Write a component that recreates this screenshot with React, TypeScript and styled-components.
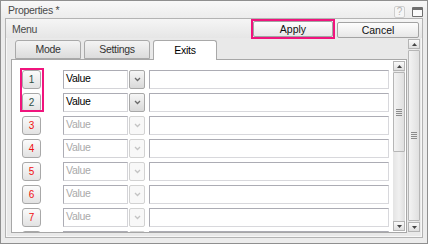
import React from "react";
import styled, { createGlobalStyle } from "styled-components";

const GlobalStyle = createGlobalStyle`
  * { box-sizing: border-box; }
  body {
    margin: 0;
    font-family: "Liberation Sans", Arial, sans-serif;
    font-size: 10.5px;
    letter-spacing: -0.3px;
  }
`;

const PINK = "#f0147d";

const Window = styled.div`
  width: 428px;
  height: 244px;
  border: 1px solid #8f8f8f;
  background: #ececec;
  display: flex;
  flex-direction: column;
  overflow: hidden;
`;

const TitleBar = styled.div`
  height: 17px;
  flex: none;
  display: flex;
  align-items: center;
  padding: 0 4px 0 7px;
  background: linear-gradient(#f8f8f8, #ececec);
`;

const TitleText = styled.span`
  color: #4a4a4a;
`;

const TitleIcons = styled.div`
  margin-left: auto;
  display: flex;
  align-items: center;
  gap: 7px;
  padding-top: 4px;
`;

const HelpIcon = styled.div`
  width: 11px;
  height: 12px;
  border: 1px solid #cfcfcf;
  border-radius: 2px;
  color: #b5b5b5;
  font-size: 10px;
  line-height: 10px;
  text-align: center;
  background: #f6f6f6;
`;

const MaxIcon = styled.div`
  width: 11px;
  height: 10px;
  border: 1px solid #6f6f6f;
  border-top-width: 3px;
  border-radius: 1px;
  background: #fafafa;
`;

const Frame = styled.div`
  flex: 1;
  min-height: 0;
  margin: 0 4px 5px 4px;
  border: 1px solid #b3b3b3;
  box-shadow: inset 0 0 0 1px #f7f7f7;
  background: #e9e9e9;
  display: flex;
  flex-direction: column;
`;

const MenuBar = styled.div`
  height: 19px;
  flex: none;
  display: flex;
  align-items: center;
  padding: 0 3px 0 6px;
  background: linear-gradient(#f5f5f5, #e6e6e6);
`;

const MenuTitle = styled.span`
  color: #4a4a4a;
`;

const Actions = styled.div`
  margin-left: auto;
  display: flex;
  align-items: center;
  gap: 2px;
  padding-top: 2px;
`;

const Marked = styled.div`
  border: 2px solid ${PINK};
  margin-top: -1px;
`;

const ActionButton = styled.button<{ $width: number }>`
  width: ${(p) => p.$width}px;
  height: 16px;
  padding: 0;
  font: inherit;
  color: #111;
  border: 1px solid #a3a3a3;
  border-radius: 2px;
  background: linear-gradient(#fdfdfd, #e7e7e7);
  display: block;
`;

const Main = styled.div`
  flex: 1;
  min-height: 0;
  display: flex;
  padding: 1px 3px 4px 5px;
  gap: 1px;
`;

const Column = styled.div`
  flex: 1;
  min-height: 0;
  display: flex;
  flex-direction: column;
`;

const TabRow = styled.div`
  height: 20px;
  flex: none;
  display: flex;
  align-items: flex-end;
  gap: 3px;
  padding-left: 4px;
  position: relative;
  z-index: 1;
`;

const Tab = styled.div<{ $active?: boolean }>`
  width: ${(p) => (p.$active ? 64 : 66)}px;
  height: ${(p) => (p.$active ? 20 : 19)}px;
  margin-bottom: ${(p) => (p.$active ? -1 : 0)}px;
  border: 1px solid #a9a9a9;
  border-bottom: ${(p) => (p.$active ? "none" : "1px solid #a9a9a9")};
  border-radius: 3px 3px 0 0;
  background: ${(p) => (p.$active ? "#fff" : "linear-gradient(#f4f4f4, #dcdcdc)")};
  color: ${(p) => (p.$active ? "#000" : "#333")};
  display: flex;
  align-items: center;
  justify-content: center;
  padding-bottom: 1px;
`;

const TabPanel = styled.div`
  flex: 1;
  min-height: 0;
  display: flex;
  background: #fff;
  border: 1px solid #a7a7a7;
`;

const Rows = styled.div`
  flex: 1;
  position: relative;
  overflow: hidden;
  padding: 10px 0 0 10px;
  display: flex;
  flex-direction: column;
  gap: 4px;
`;

const Row = styled.div`
  height: 19px;
  flex: none;
  display: flex;
  align-items: center;
`;

const NumButton = styled.div<{ $enabled: boolean }>`
  width: 19px;
  height: 19px;
  border: 1px solid #a8a8a8;
  border-radius: 3px;
  background: linear-gradient(#fbfbfb, #e2e2e2);
  color: ${(p) => (p.$enabled ? "#2f4f45" : "#f01010")};
  display: flex;
  align-items: center;
  justify-content: center;
  font-size: 10px;
`;

const SelectGroup = styled.div`
  margin-left: 22px;
  display: flex;
  gap: 1px;
`;

const SelectBox = styled.div<{ $enabled: boolean }>`
  width: 65px;
  height: 19px;
  border: 1px solid #acacb4;
  border-right-color: #d4d4d8;
  border-bottom-color: #d4d4d8;
  padding: 0 2px;
  line-height: 15px;
  color: ${(p) => (p.$enabled ? "#000" : "#a9a9a9")};
`;

const DropButton = styled.div<{ $enabled: boolean }>`
  width: 16px;
  height: 19px;
  border: 1px solid ${(p) => (p.$enabled ? "#a8a8a8" : "#d2d2d2")};
  border-radius: 2px;
  background: ${(p) => (p.$enabled ? "linear-gradient(#f6f6f6, #d9d9d9)" : "#f8f8f8")};
  display: flex;
  align-items: center;
  justify-content: center;
`;

const TextBox = styled.div`
  margin-left: 4px;
  width: 240px;
  height: 19px;
  border: 1px solid #acacb4;
  border-right-color: #d8d8dc;
  border-bottom-color: #d8d8dc;
`;

const Highlight = styled.div`
  position: absolute;
  left: 8px;
  top: 8px;
  width: 24px;
  height: 44px;
  border: 2px solid ${PINK};
  pointer-events: none;
`;

const Scrollbar = styled.div<{ $inset?: boolean }>`
  width: 12px;
  flex: none;
  margin: ${(p) => (p.$inset ? "1px 1px 1px 4px" : "0 0 1px 0")};
  display: flex;
  flex-direction: column;
  background: linear-gradient(90deg, #e4e4e4, #f0f0f0 50%, #dedede);
`;

const ArrowButton = styled.div`
  height: 10px;
  flex: none;
  border: 1px solid #b4b4b4;
  background: linear-gradient(#fafafa, #dedede);
  display: flex;
  align-items: center;
  justify-content: center;
`;

const Track = styled.div`
  flex: 1;
  min-height: 0;
  display: flex;
  flex-direction: column;
  padding: 1px 0;
`;

const Thumb = styled.div<{ $size: string }>`
  height: ${(p) => p.$size};
  border: 1px solid #b6b6b6;
  border-radius: 1px;
  background: linear-gradient(90deg, #f3f3f3, #e0e0e0);
  display: flex;
  align-items: center;
  justify-content: center;
`;

const Grip = styled.div`
  width: 6px;
  height: 7px;
  background: repeating-linear-gradient(#8c8c8c 0 1px, transparent 1px 2px);
`;

const Chevron = ({ color }: { color: string }) => (
  <svg width="7" height="5" viewBox="0 0 7 5">
    <path d="M1 1 L3.5 3.5 L6 1" fill="none" stroke={color} strokeWidth="1.3" />
  </svg>
);

const Arrow = ({ up }: { up?: boolean }) => (
  <svg width="5" height="3" viewBox="0 0 5 3">
    <path d={up ? "M0 3 L2.5 0 L5 3 Z" : "M0 0 L2.5 3 L5 0 Z"} fill="#444" />
  </svg>
);

const rows = [1, 2, 3, 4, 5, 6, 7, 8];

const App: React.FC = () => {
  return (
    <>
      <GlobalStyle />
      <Window>
        <TitleBar>
          <TitleText>Properties *</TitleText>
          <TitleIcons>
            <HelpIcon>?</HelpIcon>
            <MaxIcon />
          </TitleIcons>
        </TitleBar>
        <Frame>
          <MenuBar>
            <MenuTitle>Menu</MenuTitle>
            <Actions>
              <Marked>
                <ActionButton $width={80}>Apply</ActionButton>
              </Marked>
              <ActionButton $width={82}>Cancel</ActionButton>
            </Actions>
          </MenuBar>
          <Main>
            <Column>
              <TabRow>
                <Tab>Mode</Tab>
                <Tab>Settings</Tab>
                <Tab $active>Exits</Tab>
              </TabRow>
              <TabPanel>
                <Rows>
                  {rows.map((n) => {
                    const enabled = n <= 2;
                    return (
                      <Row key={n}>
                        <NumButton $enabled={enabled}>{n}</NumButton>
                        <SelectGroup>
                          <SelectBox $enabled={enabled}>Value</SelectBox>
                          <DropButton $enabled={enabled}>
                            <Chevron color={enabled ? "#6a6a6a" : "#c4c4c4"} />
                          </DropButton>
                        </SelectGroup>
                        <TextBox />
                      </Row>
                    );
                  })}
                  <Highlight />
                </Rows>
                <Scrollbar $inset>
                  <ArrowButton>
                    <Arrow up />
                  </ArrowButton>
                  <Track>
                    <Thumb $size="80px">
                      <Grip />
                    </Thumb>
                  </Track>
                  <ArrowButton>
                    <Arrow />
                  </ArrowButton>
                </Scrollbar>
              </TabPanel>
            </Column>
            <Scrollbar>
              <ArrowButton>
                <Arrow up />
              </ArrowButton>
              <Track>
                <Thumb $size="100%">
                  <Grip />
                </Thumb>
              </Track>
              <ArrowButton>
                <Arrow />
              </ArrowButton>
            </Scrollbar>
          </Main>
        </Frame>
      </Window>
    </>
  );
};

export default App;
